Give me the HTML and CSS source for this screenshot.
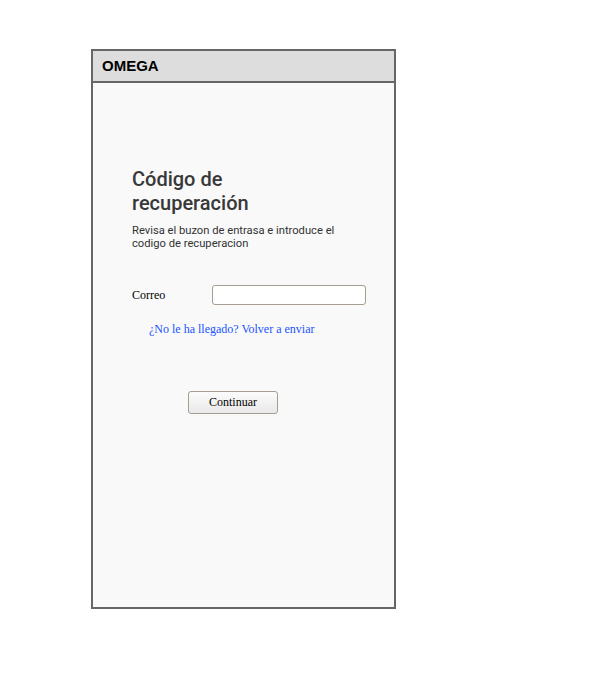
FILE: index.html
```html
<!DOCTYPE html>
<html lang="es">
<head>
<meta charset="utf-8">
<title>OMEGA</title>
<link rel="stylesheet" href="styles.css">
</head>
<body>
<div class="frame">
  <div class="header">OMEGA</div>
  <div class="body">
    <div class="content">
      <h1 class="title">Código de recuperación</h1>
      <p class="subtitle">Revisa el buzon de entrasa e introduce el codigo de recuperacion</p>
      <div class="field">
        <label class="label" for="correo">Correo</label>
        <input class="input" id="correo" type="text">
      </div>
      <a class="link" href="#">¿No le ha llegado? Volver a enviar</a>
      <button class="button" type="button">Continuar</button>
    </div>
  </div>
</div>
</body>
</html>
```
FILE: styles.css
```css
html, body {
  margin: 0;
  padding: 0;
  background: #ffffff;
}
.frame {
  margin: 49px 0 0 91px;
  width: 301px;
  height: 556px;
  border: 2px solid #666666;
  display: flex;
  flex-direction: column;
  background: #f9f9f9;
}
.header {
  height: 32px;
  box-sizing: border-box;
  border-bottom: 2px solid #666666;
  background: #dddddd;
  font-family: "Liberation Sans", Arial, sans-serif;
  font-weight: bold;
  font-size: 15px;
  line-height: 30px;
  padding-left: 9px;
  color: #000;
}
.body {
  flex: 1;
  padding: 84px 0 0 39px;
}
.content {
  width: 234px;
  display: flex;
  flex-direction: column;
  align-items: flex-start;
}
.title {
  margin: 0;
  width: 200px;
  font-family: Roboto, "Noto Sans", sans-serif;
  font-weight: 500;
  font-size: 20px;
  line-height: 24px;
  color: #383838;
}
.subtitle {
  margin: 9px 0 0 0;
  font-family: Roboto, "Noto Sans", sans-serif;
  font-size: 11.2px;
  line-height: 13px;
  color: #333333;
}
.field {
  margin-top: 35px;
  display: flex;
  align-items: center;
  width: 234px;
}
.label {
  width: 80px;
  font-family: "Liberation Serif", "Times New Roman", serif;
  font-size: 12px;
  color: #000;
}
.input {
  width: 154px;
  height: 20px;
  box-sizing: border-box;
  margin: 0;
  border: 1px solid #a59c92;
  border-radius: 3px;
  background: #ffffff;
  padding: 0 4px;
  outline: none;
}
.link {
  margin: 17px 0 0 17px;
  font-family: "Liberation Serif", "Times New Roman", serif;
  font-size: 12px;
  line-height: 15px;
  color: #1a55ff;
  text-decoration: none;
}
.button {
  margin: 54px 0 0 56px;
  width: 90px;
  height: 23px;
  box-sizing: border-box;
  border: 1px solid #a59c92;
  border-radius: 3px;
  background: linear-gradient(#fbfbfb, #e9e9e9);
  font-family: "Liberation Serif", "Times New Roman", serif;
  font-size: 12px;
  color: #000;
  padding: 0;
}
```
